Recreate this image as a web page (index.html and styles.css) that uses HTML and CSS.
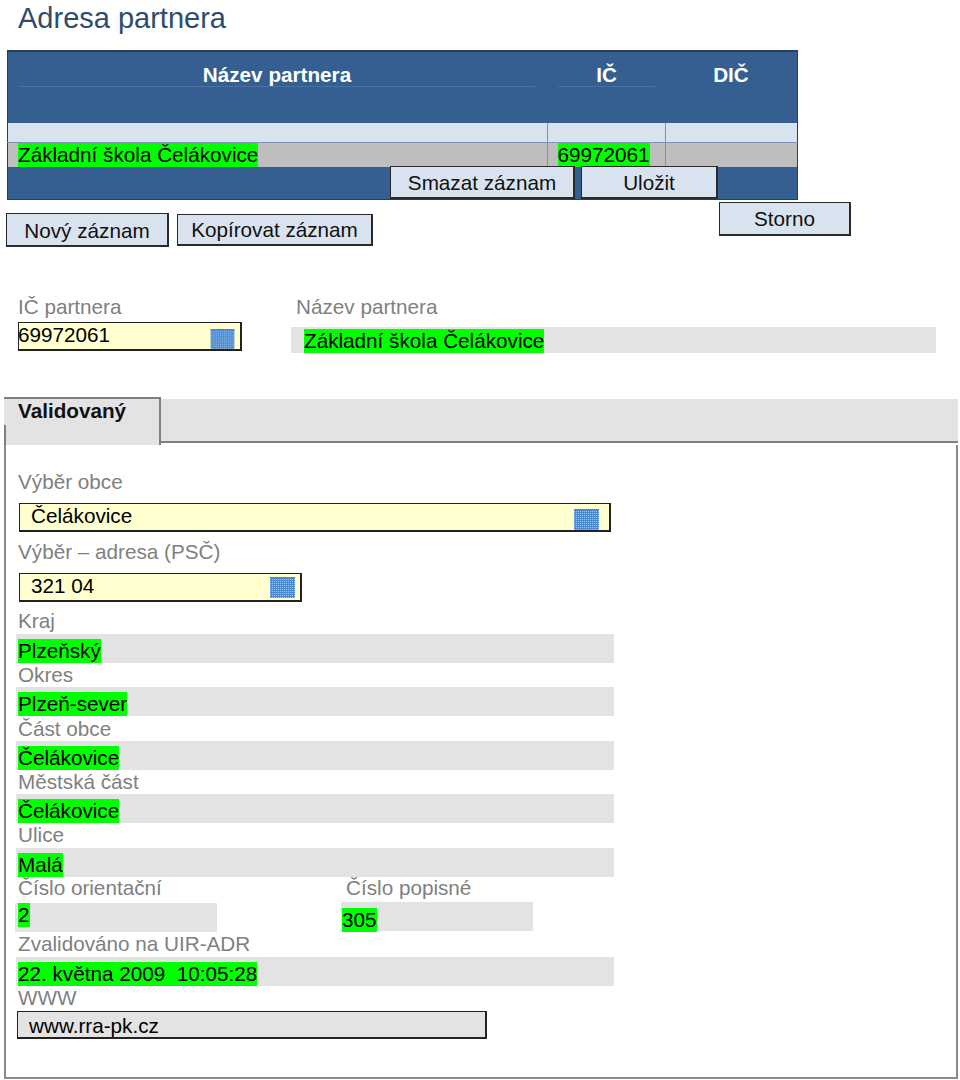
FILE: index.html
```html
<!DOCTYPE html>
<html>
<head>
    <title>Adresa partnera</title>
    <link rel="stylesheet" href="styles.css">
</head>
<body>
    <h1>Adresa partnera</h1>

    <table class="grid">
        <thead>
            <tr>
                <th class="col-name"><span>Název partnera</span></th>
                <th class="col-ic"><span>IČ</span></th>
                <th class="col-dic"><span>DIČ</span></th>
            </tr>
        </thead>
        <tbody>
            <tr class="filter-row">
                <td></td>
                <td></td>
                <td></td>
            </tr>
            <tr class="data-row">
                <td><span class="ok">Základní škola Čelákovice</span></td>
                <td><span class="ok">69972061</span></td>
                <td></td>
            </tr>
        </tbody>
        <tfoot>
            <tr>
                <td colspan="3">
                    <div class="grid-actions">
                        <button class="btn btn-delete">Smazat záznam</button>
                        <button class="btn btn-save">Uložit</button>
                    </div>
                </td>
            </tr>
        </tfoot>
    </table>

    <div class="actions">
        <button class="btn btn-new">Nový záznam</button>
        <button class="btn btn-copy">Kopírovat záznam</button>
        <button class="btn btn-cancel">Storno</button>
    </div>

    <div class="partner">
        <div class="partner-ic">
            <label>IČ partnera</label>
            <div class="picker picker-ic">
                <span>69972061</span>
                <svg class="cal" viewBox="0 0 25 21"><use href="#cal-grid"/></svg>
            </div>
        </div>
        <div class="partner-name">
            <label>Název partnera</label>
            <div class="band band-name"><span class="ok">Základní škola Čelákovice</span></div>
        </div>
    </div>

    <div class="tabs">
        <div class="tab">Validovaný</div>
        <div class="tab-rest"></div>
    </div>

    <div class="panel">
        <label>Výběr obce</label>
        <div class="picker picker-obec">
            <span>Čelákovice</span>
            <svg class="cal" viewBox="0 0 25 21"><use href="#cal-grid"/></svg>
        </div>
        <label class="after-picker">Výběr – adresa (PSČ)</label>
        <div class="picker picker-psc">
            <span>321 04</span>
            <svg class="cal" viewBox="0 0 25 21"><use href="#cal-grid"/></svg>
        </div>
        <label class="after-picker kraj">Kraj</label>
        <div class="band"><span class="ok">Plzeňský</span></div>
        <label>Okres</label>
        <div class="band"><span class="ok">Plzeň-sever</span></div>
        <label class="gap">Část obce</label>
        <div class="band"><span class="ok">Čelákovice</span></div>
        <label>Městská část</label>
        <div class="band"><span class="ok">Čelákovice</span></div>
        <label>Ulice</label>
        <div class="band band-ulice"><span class="ok">Malá</span></div>

        <div class="pair">
            <div class="pair-left">
                <label>Číslo orientační</label>
                <div class="band band-or"><span class="ok">2</span></div>
            </div>
            <div class="pair-right">
                <label>Číslo popisné</label>
                <div class="band band-pop"><span class="ok">305</span></div>
            </div>
        </div>

        <label class="after-pair">Zvalidováno na UIR-ADR</label>
        <div class="band band-date"><span class="ok">22. května 2009&nbsp; 10:05:28</span></div>
        <label>WWW</label>
        <div class="www">www.rra-pk.cz</div>
    </div>

    <svg class="defs" width="0" height="0">
        <defs>
            <pattern id="cal-cells" width="2" height="2" patternUnits="userSpaceOnUse">
                <rect width="2" height="2" fill="#4a8ad0"/>
                <rect width="1" height="1" fill="#9cc2ea"/>
            </pattern>
            <g id="cal-grid">
                <rect width="25" height="21" rx="1" fill="url(#cal-cells)"/>
                <rect width="25" height="2" fill="#4a8ad0"/>
            </g>
        </defs>
    </svg>
</body>
</html>
```

FILE: styles.css
```css
body {
    margin: 0;
    font-family: "Liberation Sans", Arial, sans-serif;
    font-size: 20.7px;
    color: #000;
    background: #fff;
    overflow-x: hidden;
}

h1 {
    margin: 0;
    padding: 0 0 0 18px;
    height: 50px;
    box-sizing: border-box;
    font-size: 29px;
    font-weight: normal;
    line-height: 36px;
    color: #2f4c6e;
}

label {
    display: block;
    height: 24px;
    line-height: 24px;
    color: #808080;
}

.ok {
    display: inline-block;
    height: 24px;
    line-height: 24px;
    background: #00ff00;
}

/* grid */
.grid {
    margin-left: 7px;
    width: 791px;
    table-layout: fixed;
    border-collapse: collapse;
    border: 1px solid #2c3e57;
    border-top-width: 2px;
    background: #355e91;
}

.grid td, .grid th {
    padding: 0;
}

.col-name { width: 539px; }
.col-ic { width: 118px; }

.grid th {
    height: 71px;
    vertical-align: top;
    color: #fff;
    font-weight: bold;
}

.grid th span {
    display: block;
    height: 24px;
    margin-top: 10px;
    line-height: 25px;
    text-align: center;
    border-bottom: 1px solid #4a719f;
}

.grid .col-name span { margin: 10px 12px 0 11px; }
.grid .col-ic span { margin: 10px 10px 0 11px; }
.grid .col-dic span { border-bottom: 0; }

.filter-row td {
    height: 19px;
    background: #d9e3f0;
    border-left: 1px solid #7e93b3;
    border-bottom: 1px solid #7e93b3;
}

.filter-row td:first-child, .data-row td:first-child {
    border-left: 0;
}

.data-row td {
    height: 24px;
    background: #bebebe;
    border-left: 1px solid #7e93b3;
    padding-left: 10px;
    vertical-align: top;
}

.grid-actions {
    display: flex;
    height: 32px;
    padding-left: 382px;
    gap: 6px;
}

.btn {
    margin: 0;
    padding: 0;
    box-sizing: border-box;
    height: 34px;
    font: inherit;
    color: #111;
    background: #d9e3f0;
    border: 2px solid #2a2a2a;
    border-top-width: 1px;
    border-left-width: 1px;
}

.btn-delete { width: 185px; height: 33px; margin-top: -1px; padding-top: 2px; }
.btn-save { width: 137px; height: 33px; margin-top: -1px; padding-top: 2px; }

.actions {
    display: flex;
    align-items: flex-start;
    height: 95px;
    padding-top: 2px;
    box-sizing: border-box;
    padding-left: 6px;
}

.btn-new { width: 163px; margin-top: 11px; padding-top: 2px; }
.btn-copy { width: 196px; height: 32px; margin: 12px 0 0 8px; }
.btn-cancel { width: 132px; margin-left: 346px; }

/* partner */
.partner {
    display: flex;
    height: 102px;
    align-items: flex-start;
    padding-left: 18px;
}

.partner-ic {
    width: 224px;
}

.partner-name {
    margin-left: 49px;
    width: 645px;
}

.partner-name label {
    padding-left: 5px;
}

.picker {
    display: flex;
    justify-content: space-between;
    align-items: flex-end;
    box-sizing: border-box;
    height: 29px;
    background: #ffffcf;
    border: 1px solid #222;
    border-right-width: 2px;
    border-bottom-width: 2px;
}

.picker span {
    align-self: flex-start;
    line-height: 24px;
    margin-left: 11px;
}

.cal {
    display: block;
    width: 25px;
    height: 21px;
    margin-right: 10px;
}

.picker-ic { width: 224px; margin-top: 3px; }
.picker-ic span { margin-left: -1px; }
.picker-ic .cal { margin-right: 5px; height: 20px; }
.picker-obec { width: 592px; margin: 9px 0 0 1px; }
.picker-psc { width: 283px; margin: 9px 0 0 1px; }
.picker-psc .cal { margin-right: 5px; margin-bottom: 2px; }

.band {
    box-sizing: border-box;
    width: 598px;
    height: 29px;
    margin-left: -2px;
    padding: 5px 0 0 2px;
    background: #e3e3e3;
}

.band-name {
    width: 645px;
    height: 26px;
    margin: 8px 0 0 0;
    padding: 2px 0 0 13px;
}

/* tabs */
.tabs {
    display: flex;
    align-items: flex-start;
    height: 48px;
    padding-left: 4px;
}

.tab {
    position: relative;
    box-sizing: border-box;
    width: 157px;
    height: 48px;
    padding: 0 0 0 14px;
    background: #e3e3e3;
    border-top: 2px solid #808080;
    border-right: 2px solid #808080;
    font-weight: bold;
    line-height: 24px;
    color: #111;
}

.tab::before {
    content: '';
    position: absolute;
    left: 0;
    top: 26px;
    width: 2px;
    height: 20px;
    background: #808080;
}

.tab-rest {
    box-sizing: border-box;
    width: 797px;
    height: 44px;
    margin-top: 2px;
    background: #e3e3e3;
    border-bottom: 2px solid #808080;
}

.panel {
    box-sizing: border-box;
    width: 954px;
    height: 634px;
    margin-left: 4px;
    padding: 25px 0 0 12px;
    border: 2px solid #8a8a8a;
    border-top: 0;
}

.after-picker { margin-top: 8px; }
.kraj { margin-top: 7px; margin-bottom: 1px; }
.gap { margin-top: 1px; }
.band-ulice { margin-top: 1px; }

.pair {
    display: flex;
    height: 55px;
    margin-top: -1px;
    margin-bottom: 2px;
}

.pair-left { width: 328px; }

.band-or {
    width: 202px;
    margin: 3px 0 0 -3px;
    padding: 0 0 0 3px;
}

.band-pop {
    width: 192px;
    margin: 2px 0 0 -5px;
    padding: 6px 0 0 1px;
}

.after-pair { margin-top: -1px; margin-bottom: 1px; }

.www {
    box-sizing: border-box;
    width: 470px;
    height: 28px;
    margin: 1px 0 0 -1px;
    padding-left: 11px;
    line-height: 28px;
    background: #e3e3e3;
    border: 1px solid #222;
    border-right-width: 2px;
    border-bottom-width: 2px;
}

.defs {
    position: absolute;
}
```
